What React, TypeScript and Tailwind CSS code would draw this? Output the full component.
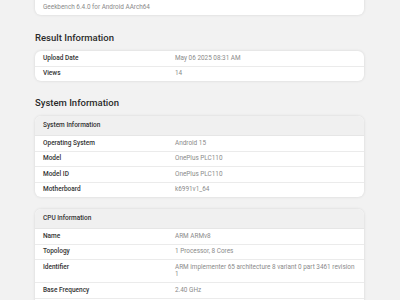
const resultRows = [
  { label: 'Upload Date', value: 'May 06 2025 08:31 AM' },
  { label: 'Views', value: '14' },
];

const systemRows = [
  { label: 'Operating System', value: 'Android 15' },
  { label: 'Model', value: 'OnePlus PLC110' },
  { label: 'Model ID', value: 'OnePlus PLC110' },
  { label: 'Motherboard', value: 'k6991v1_64' },
];

const cpuRows = [
  { label: 'Name', value: 'ARM ARMv8' },
  { label: 'Topology', value: '1 Processor, 8 Cores' },
  { label: 'Identifier', value: 'ARM implementer 65 architecture 8 variant 0 part 3461 revision 1' },
  { label: 'Base Frequency', value: '2.40 GHz' },
  { label: 'Cluster 1', value: '2 Cores' },
];

function Row({ label, value, last }: { label: string; value: string; last?: boolean }) {
  return (
    <div className={`flex px-[8px] py-[3.5px] ${last ? '' : 'border-b border-[#ebebeb]'}`}>
      <div className="w-[132px] shrink-0 text-[6.5px] leading-[7.5px] font-medium text-[#333]">{label}</div>
      <div className="flex-1 text-[6.4px] leading-[7.5px] text-[#8a8a8a]">{value}</div>
    </div>
  );
}

function Card({ title, rows }: { title?: string; rows: { label: string; value: string }[] }) {
  return (
    <div className="bg-white rounded-[6px] shadow-[0_0_3px_rgba(0,0,0,0.12)] overflow-hidden">
      {title && (
        <div className="h-[20px] px-[8px] flex items-center bg-[#f0f0f0] border-b border-[#e6e6e6] text-[6.5px] font-medium text-[#333]">
          {title}
        </div>
      )}
      {rows.map((r, i) => (
        <Row key={r.label} label={r.label} value={r.value} last={i === rows.length - 1} />
      ))}
    </div>
  );
}

export default function App() {
  return (
    <div className="w-[400px] h-[300px] overflow-hidden bg-[#f2f2f2] font-['Roboto',sans-serif]">
      <div className="w-[329px] ml-[35px] -mt-[16px]">
        <div className="bg-white rounded-[6px] shadow-[0_0_3px_rgba(0,0,0,0.12)] px-[8px] pt-[6px] pb-[4px]">
          <div className="text-[6.5px] leading-[7.5px] font-medium text-[#333]">Geekbench 6</div>
          <div className="text-[6.4px] leading-[7.5px] text-[#8a8a8a] mt-[6px]">Geekbench 6.4.0 for Android AArch64</div>
        </div>

        <h2 className="mt-[17px] mb-[7px] text-[9.5px] leading-[12px] font-medium text-[#2b2b2b]">Result Information</h2>
        <Card rows={resultRows} />

        <h2 className="mt-[16px] mb-[7px] text-[9.5px] leading-[12px] font-medium text-[#2b2b2b]">System Information</h2>
        <Card title="System Information" rows={systemRows} />

        <div className="mt-[12px]">
          <Card title="CPU Information" rows={cpuRows} />
        </div>
      </div>
    </div>
  );
}
